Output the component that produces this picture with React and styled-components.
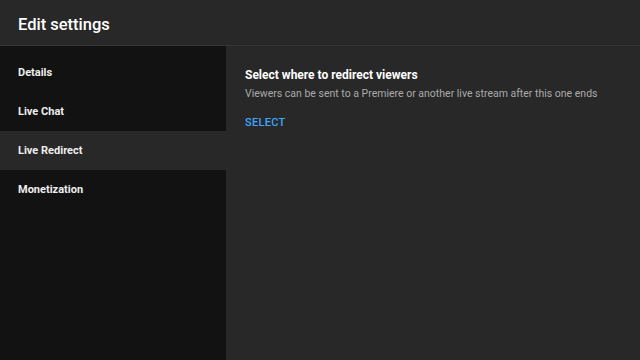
import styled, { createGlobalStyle } from "styled-components";

const GlobalStyle = createGlobalStyle`
  html, body {
    margin: 0;
    height: 100%;
    background: #282828;
  }
  #root {
    height: 100%;
  }
  * {
    box-sizing: border-box;
  }
`;

const tabs = ["Details", "Live Chat", "Live Redirect", "Monetization"];

export default function App() {
  return (
    <>
      <GlobalStyle />
      <Page>
        <Header>
          <Title>Edit settings</Title>
        </Header>
        <Body>
          <Sidebar>
            {tabs.map((t) => (
              <Tab key={t} $active={t === "Live Redirect"}>
                {t}
              </Tab>
            ))}
          </Sidebar>
          <Content>
            <Heading>Select where to redirect viewers</Heading>
            <Description>
              Viewers can be sent to a Premiere or another live stream after this one ends
            </Description>
            <SelectButton>SELECT</SelectButton>
          </Content>
        </Body>
      </Page>
    </>
  );
}

const Page = styled.div`
  display: flex;
  flex-direction: column;
  height: 100%;
  font-family: Roboto, "Liberation Sans", sans-serif;
  color: #f1f1f1;
`;

const Header = styled.header`
  height: 46px;
  display: flex;
  align-items: center;
  padding: 3px 18px 0;
  background: #282828;
  border-bottom: 1px solid #363636;
`;

const Title = styled.h1`
  margin: 0;
  font-size: 16.5px;
  font-weight: 500;
  color: #ffffff;
`;

const Body = styled.div`
  flex: 1;
  display: flex;
`;

const Sidebar = styled.nav`
  width: 226px;
  background: #121212;
  padding-top: 7px;
  display: flex;
  flex-direction: column;
`;

const Tab = styled.div`
  height: 39px;
  display: flex;
  align-items: center;
  padding: 0 18px;
  font-size: 11px;
  font-weight: 700;
  color: #eeeeee;
  background: ${(p) => (p.$active ? "#282828" : "transparent")};
`;

const Content = styled.section`
  flex: 1;
  background: #282828;
  padding: 22px 19px;
  display: flex;
  flex-direction: column;
  align-items: flex-start;
`;

const Heading = styled.h2`
  margin: 0;
  font-size: 12px;
  font-weight: 700;
  color: #ffffff;
`;

const Description = styled.p`
  margin: 5px 0 0;
  font-size: 10.5px;
  color: #aaaaaa;
`;

const SelectButton = styled.button`
  margin-top: 16px;
  padding: 0;
  border: none;
  background: none;
  font-family: inherit;
  font-size: 11px;
  font-weight: 500;
  letter-spacing: 0.3px;
  color: #3ea6ff;
  cursor: pointer;
`;
